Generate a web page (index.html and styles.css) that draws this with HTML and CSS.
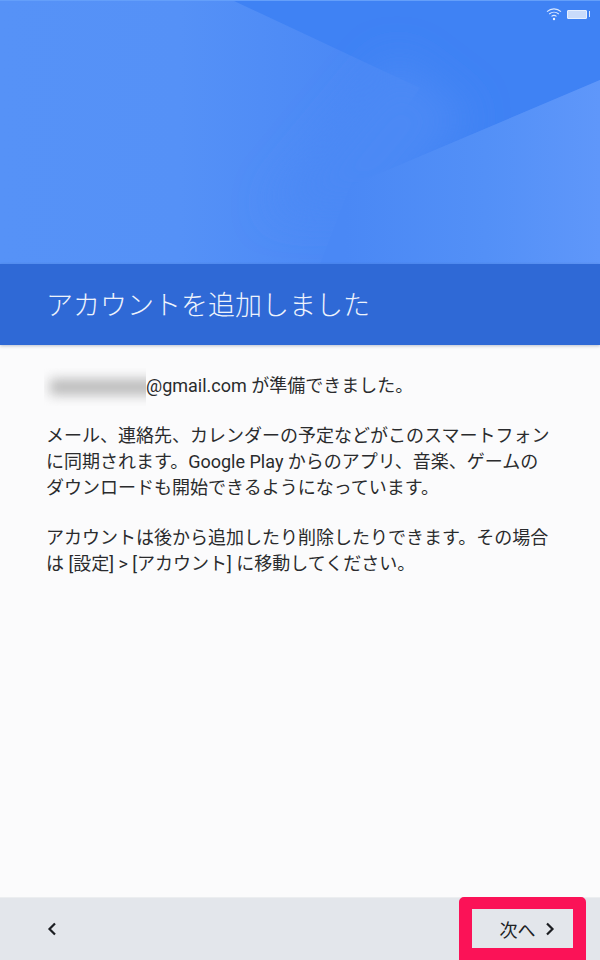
FILE: index.html
```html
<!DOCTYPE html>
<html lang="ja">
<head>
<meta charset="utf-8">
<title>アカウントを追加しました</title>
<link rel="stylesheet" href="styles.css">
</head>
<body>
<div class="screen">
  <header class="hero">
    <svg class="hero-art" viewBox="0 0 600 264" preserveAspectRatio="none" aria-hidden="true">
      <defs>
        <linearGradient id="heroBase" gradientUnits="userSpaceOnUse" x1="0" y1="0" x2="600" y2="0">
          <stop offset="0" stop-color="#5692f7"/>
          <stop offset="0.3" stop-color="#5591f7"/>
          <stop offset="0.6" stop-color="#4a88f5"/>
          <stop offset="1" stop-color="#4a88f5"/>
        </linearGradient>
        <linearGradient id="heroLight" gradientUnits="userSpaceOnUse" x1="345" y1="0" x2="600" y2="0">
          <stop offset="0" stop-color="#4a88f5"/>
          <stop offset="0.55" stop-color="#5390f7"/>
          <stop offset="1" stop-color="#5f97fa"/>
        </linearGradient>
        <filter id="soften" x="-60%" y="-60%" width="220%" height="220%">
          <feGaussianBlur stdDeviation="20"/>
        </filter>
      </defs>
      <rect width="600" height="264" fill="url(#heroBase)"/>
      <polygon points="232,0 600,0 600,80 350,186 420,88" fill="#3f82f4"/>
      <polygon points="395,58 470,115 390,210 270,210" fill="#4c89f5" filter="url(#soften)"/>
      <polygon points="600,80 350,186 320,264 600,264" fill="url(#heroLight)"/>
      <rect width="600" height="1" fill="#649ffa"/>
    </svg>
    <div class="status">
      <svg class="wifi" viewBox="0 0 16 14" aria-hidden="true">
        <path d="M1 4.6C5 1 11 1 15 4.6M3.2 7C6 4.6 10 4.6 12.8 7M5.5 9.4C7 8.2 9 8.2 10.5 9.4" fill="none" stroke="#dbe8ff" stroke-width="1.1"/>
        <circle cx="8" cy="12" r="1.2" fill="#eef4ff"/>
      </svg>
      <span class="battery"></span><span class="battery-tip"></span>
    </div>
  </header>

  <div class="title-band">
    <h1 class="title">アカウントを追加しました</h1>
  </div>

  <main class="content">
    <p class="para"><span class="mask"><span class="mask-blur"></span></span>@gmail.com が準備できました。</p>
    <p class="para">メール、連絡先、カレンダーの予定などがこのスマートフォンに同期されます。Google Play からのアプリ、音楽、ゲームのダウンロードも開始できるようになっています。</p>
    <p class="para">アカウントは後から追加したり削除したりできます。その場合は [設定] &gt; [アカウント] に移動してください。</p>
  </main>

  <footer class="footer">
    <button class="back" type="button" aria-label="戻る">
      <svg class="chev" viewBox="0 0 10 14" aria-hidden="true"><path d="M8 1.5 2.5 7 8 12.5" fill="none" stroke="#1c1e22" stroke-width="2.2"/></svg>
    </button>
    <button class="next" type="button">
      <span>次へ</span>
      <svg class="chev" viewBox="0 0 10 14" aria-hidden="true"><path d="M2 1.5 7.5 7 2 12.5" fill="none" stroke="#1c1e22" stroke-width="2.2"/></svg>
    </button>
  </footer>
</div>
</body>
</html>
```
FILE: styles.css
```css
* { box-sizing: border-box; }
html, body { margin: 0; padding: 0; }
body {
  width: 600px;
  height: 960px;
  overflow: hidden;
  font-family: Roboto, "Noto Sans CJK JP", sans-serif;
  background: #fbfbfc;
}
.screen {
  display: flex;
  flex-direction: column;
  height: 960px;
}
.hero {
  position: relative;
  height: 264px;
  flex: none;
}
.hero-art {
  display: block;
  width: 100%;
  height: 100%;
}
.status {
  position: absolute;
  top: 7px;
  right: 10px;
  display: flex;
  align-items: center;
}
.wifi {
  width: 16px;
  height: 14px;
  margin-right: 5px;
}
.battery {
  width: 20px;
  height: 9px;
  border-radius: 1px;
  border: 1px solid #e6efff;
  background: #c9dbfb;
}
.battery-tip {
  width: 1px;
  height: 6px;
  margin-left: 2px;
  background: #d6e4fd;
}
.title-band {
  flex: none;
  height: 81px;
  padding: 3px 46px 0;
  display: flex;
  align-items: center;
  background: #2f69d6;
  box-shadow: 0 1px 3px rgba(40, 60, 100, 0.3);
  position: relative;
}
.title {
  margin: 0;
  font-size: 27px;
  font-weight: 300;
  line-height: 36px;
  color: #eef3fc;
}
.content {
  flex: 1;
  padding: 28px 46px 0 46px;
  color: #2a2b2d;
  font-size: 18px;
  line-height: 26px;
}
.para {
  margin: 0 0 24px;
}
.mask {
  display: inline-block;
  width: 102px;
  height: 38px;
  margin: -12px 0 -12px -2px;
  vertical-align: middle;
  overflow: hidden;
}
.mask-blur {
  display: block;
  width: 112px;
  height: 16px;
  margin: 11px 0 0 6px;
  background: #bbbbbb;
  filter: blur(6px);
}
.footer {
  flex: none;
  height: 63px;
  display: flex;
  justify-content: space-between;
  background: #e3e6eb;
  border-top: 1px solid #eceef0;
}
.back, .next {
  font: inherit;
  background: none;
  color: #202124;
  padding: 0;
  display: flex;
  align-items: center;
  justify-content: center;
}
.back {
  width: 104px;
  border: 0;
}
.next {
  width: 127px;
  margin: -1px 14px 0 0;
  padding-left: 9px;
  gap: 9px;
  font-size: 18px;
  border: solid #fb1257;
  border-width: 12px 13px;
  border-radius: 5px 5px 0 0;
}
.chev {
  width: 10px;
  height: 14px;
  display: block;
}
```
